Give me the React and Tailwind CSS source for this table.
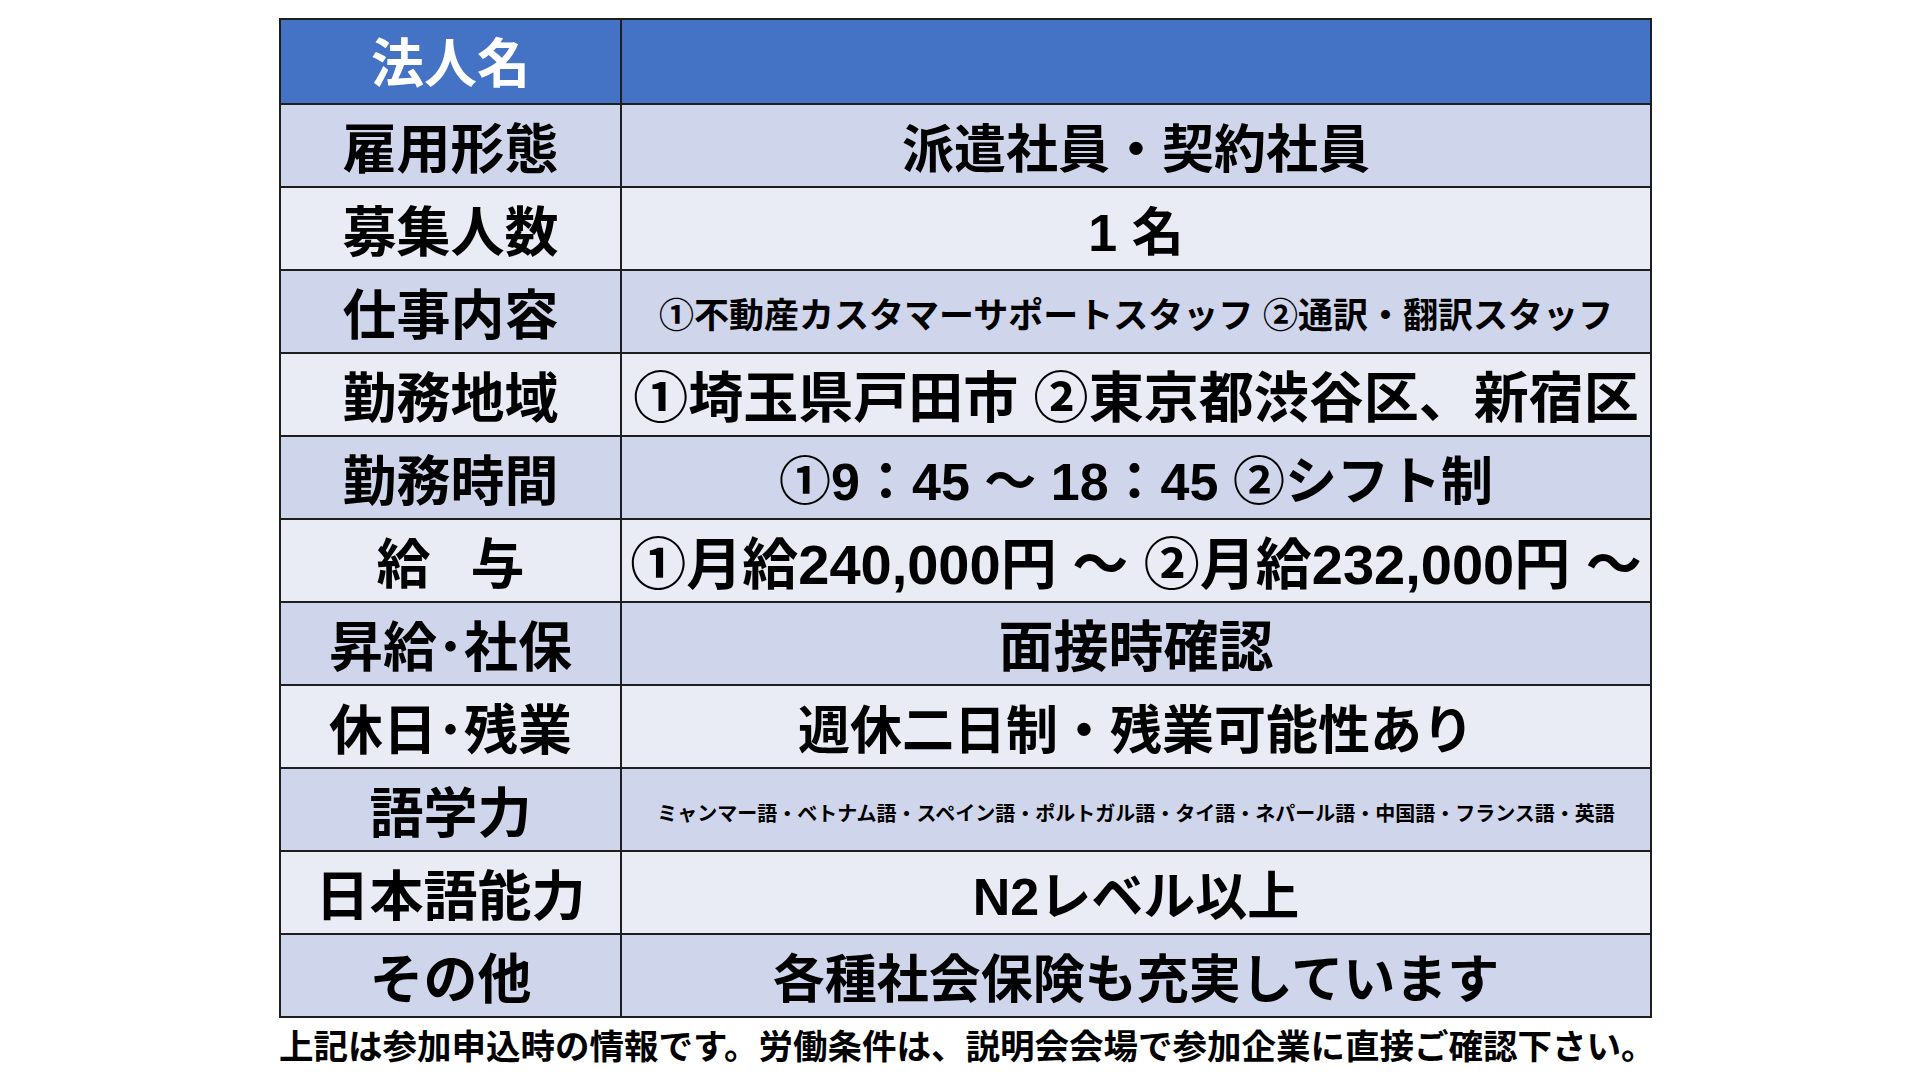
import React from 'react';

const rows = [
  { label: '雇用形態', value: '派遣社員・契約社員', size: 'text-[52px]', bg: 'bg-[#cfd5ea]' },
  { label: '募集人数', value: '1 名', size: 'text-[52px]', bg: 'bg-[#e9ebf5]' },
  { label: '仕事内容', value: '①不動産カスタマーサポートスタッフ ②通訳・翻訳スタッフ', size: 'text-[35px]', bg: 'bg-[#cfd5ea]' },
  { label: '勤務地域', value: '①埼玉県戸田市 ②東京都渋谷区、新宿区', size: 'text-[55px]', bg: 'bg-[#e9ebf5]' },
  { label: '勤務時間', value: '①9：45 ～ 18：45 ②シフト制', size: 'text-[52px]', bg: 'bg-[#cfd5ea]' },
  {
    label: (
      <>
        給<span className="inline-block w-[40px]" />与
      </>
    ),
    value: '①月給240,000円 ～ ②月給232,000円 ～',
    size: 'text-[56px]',
    bg: 'bg-[#e9ebf5]',
  },
  { label: '昇給･社保', value: '面接時確認', size: 'text-[55px]', bg: 'bg-[#cfd5ea]' },
  { label: '休日･残業', value: '週休二日制・残業可能性あり', size: 'text-[52px]', bg: 'bg-[#e9ebf5]' },
  {
    label: '語学力',
    value: 'ミャンマー語・ベトナム語・スペイン語・ポルトガル語・タイ語・ネパール語・中国語・フランス語・英語',
    size: 'text-[20px]',
    bg: 'bg-[#cfd5ea]',
  },
  { label: '日本語能力', value: 'N2レベル以上', size: 'text-[52px]', bg: 'bg-[#e9ebf5]' },
  { label: 'その他', value: '各種社会保険も充実しています', size: 'text-[52px]', bg: 'bg-[#cfd5ea]' },
];

export default function App() {
  return (
    <div className="w-[1920px] h-[1080px] bg-white font-['Liberation_Sans','Noto_Sans_CJK_JP',sans-serif] font-bold text-black">
      <div className="pt-[18px] pl-[279px]">
        <div className="w-[1373px] border-2 border-[#1e1e1e]">
          {/* header */}
          <div className="flex h-[83px] bg-[#4472c4]">
            <div className="w-[341px] shrink-0 border-r-2 border-[#1e1e1e] flex items-center justify-center pt-[6px] text-[53px] leading-none text-white">
              法人名
            </div>
            <div className="flex-1" />
          </div>

          {rows.map((row, i) => (
            <div key={i} className={`flex h-[83px] border-t-2 border-[#1e1e1e] ${row.bg}`}>
              <div className="w-[341px] shrink-0 border-r-2 border-[#1e1e1e] flex items-center justify-center pt-[8px] text-[54px] leading-none whitespace-nowrap">
                {row.label}
              </div>
              <div className={`flex-1 flex items-center justify-center pt-[8px] leading-none whitespace-nowrap ${row.size}`}>
                {row.value}
              </div>
            </div>
          ))}
        </div>

        <div className="mt-[12px] text-[34.5px] leading-none whitespace-nowrap">
          上記は参加申込時の情報です。労働条件は、説明会会場で参加企業に直接ご確認下さい。
        </div>
      </div>
    </div>
  );
}
